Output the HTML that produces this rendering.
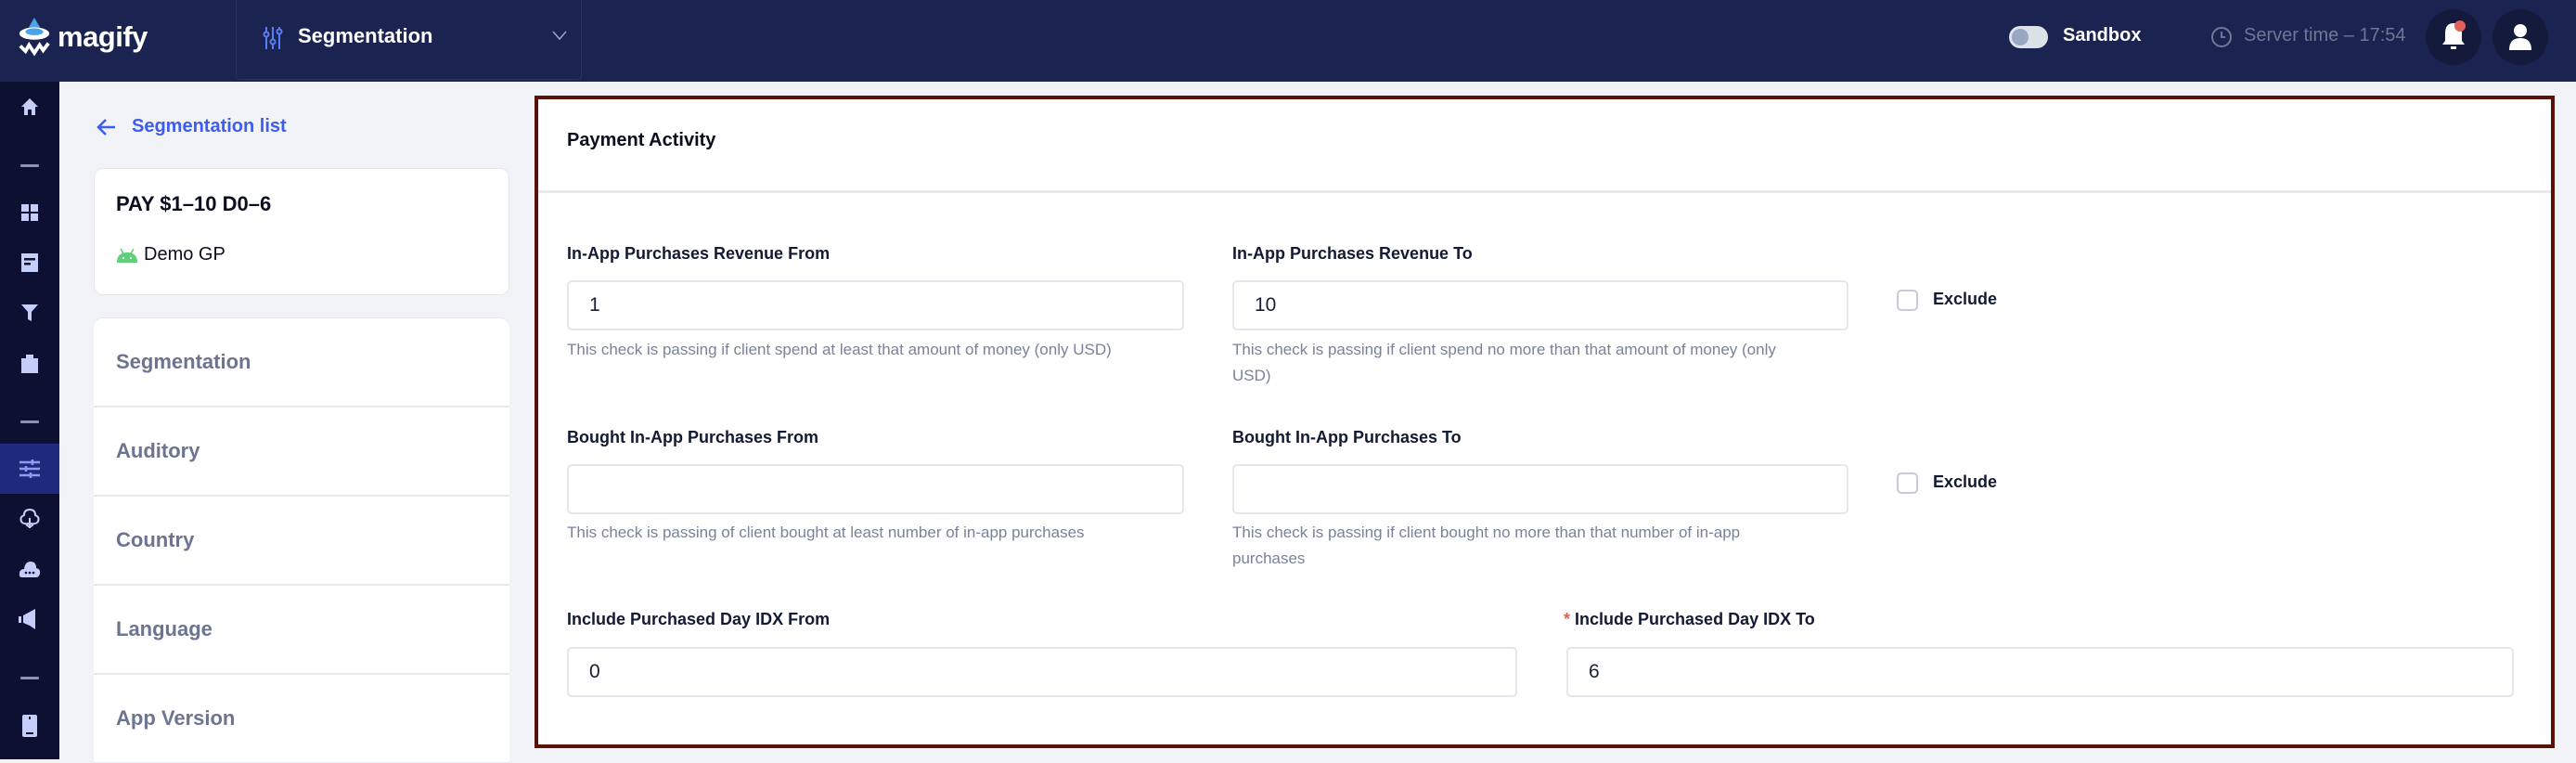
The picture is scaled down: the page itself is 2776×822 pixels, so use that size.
<!DOCTYPE html>
<html><head><meta charset="utf-8"><style>
*{box-sizing:border-box;margin:0;padding:0}
body{width:2776px;height:818px;overflow:hidden;background:#f2f3f7;font-family:"Liberation Sans",sans-serif;position:relative}
.abs{position:absolute}
.top{left:0;top:0;width:2776px;height:88px;background:#1b2350}
.side{left:0;top:88px;width:64px;height:730px;background:#0d1030}
.dash{position:absolute;left:22px;width:20px;height:3px;background:#8c93b3;border-radius:1px}
.card{position:absolute;left:101px;width:448px;background:#fff;border:1px solid #e4e6ee}
.menu{position:absolute;left:101px;width:448px;height:94px;background:#fff;color:#6b7490;font-size:22px;font-weight:bold;padding-left:24px;line-height:94px}
.lbl{position:absolute;font-size:18px;font-weight:bold;color:#131a33;line-height:20px}
.inp{position:absolute;height:54px;border:2.5px solid #e6e7ee;border-radius:5px;background:#fff;font-size:21px;color:#1a1f33;padding-left:22px;line-height:49px}
.help{position:absolute;font-size:17px;color:#7a8299;line-height:28px}
.cb{position:absolute;width:23px;height:23px;border:2.5px solid #c8cad8;border-radius:5px;background:#fff}
.exc{position:absolute;font-size:18px;font-weight:bold;color:#131a33}
</style></head><body>
<div class="abs top"></div>
<svg class="abs" style="left:18px;top:16px" width="38" height="46" viewBox="0 0 40 46">
<path d="M20 2 L27 14 Q30 18 20 19 Q10 18 13 14 Z" fill="#4aa3e8"/>
<ellipse cx="20" cy="20" rx="17" ry="7" fill="#fff"/>
<ellipse cx="20" cy="18" rx="10" ry="4" fill="#4aa3e8"/>
<path d="M4 34 L10 40 L14 33 L20 42 L26 33 L30 39 L36 31" stroke="#fff" stroke-width="4" fill="none"/>
</svg>
<div class="abs" style="left:62px;top:22px;color:#fff;font-size:31px;font-weight:bold;letter-spacing:-0.5px">magify</div>
<div class="abs" style="left:254px;top:0;width:373px;height:86px;border:1px solid #2a3260;border-top:none;border-radius:0 0 4px 4px"></div>
<svg class="abs" style="left:283px;top:28px" width="22" height="26" viewBox="0 0 22 26" stroke="#5b7cf5" stroke-width="2" fill="none">
<line x1="4" y1="1" x2="4" y2="25"/><circle cx="4" cy="9" r="2.5" fill="#1b2350"/>
<line x1="11" y1="1" x2="11" y2="25"/><circle cx="11" cy="17" r="2.5" fill="#1b2350"/>
<line x1="18" y1="1" x2="18" y2="25"/><circle cx="18" cy="6" r="2.5" fill="#1b2350"/></svg>
<div class="abs" style="left:321px;top:26px;color:#fff;font-size:22px;font-weight:bold">Segmentation</div>
<svg class="abs" style="left:594px;top:32px" width="18" height="12" viewBox="0 0 18 12"><path d="M2 2 L9 10 L16 2" stroke="#9aa0c0" stroke-width="1.6" fill="none"/></svg>
<div class="abs" style="left:2165px;top:28px;width:42px;height:24px;border-radius:12px;background:#dde1ea"></div>
<div class="abs" style="left:2168px;top:31px;width:18px;height:18px;border-radius:9px;background:#9aa6c2"></div>
<div class="abs" style="left:2223px;top:27px;color:#fff;font-size:20px;font-weight:bold">Sandbox</div>
<svg class="abs" style="left:2382px;top:28px" width="24" height="24" viewBox="0 0 24 24" stroke="#6f7796" stroke-width="2" fill="none"><circle cx="12" cy="12" r="10"/><path d="M12 6 V12 H16"/></svg>
<div class="abs" style="left:2418px;top:27px;color:#6f7796;font-size:20px">Server time – 17:54</div>
<div class="abs" style="left:2614px;top:10px;width:60px;height:60px;border-radius:30px;background:#131a3c"></div>
<svg class="abs" style="left:2630px;top:22px" width="28" height="34" viewBox="0 0 28 34"><path d="M14 3 Q5 3 5 14 L5 22 L2 26 L26 26 L23 22 L23 14 Q23 3 14 3Z" fill="#fff"/><rect x="11" y="28" width="6" height="3" fill="#fff"/><circle cx="21" cy="6" r="6" fill="#e0605a"/></svg>
<div class="abs" style="left:2686px;top:10px;width:60px;height:60px;border-radius:30px;background:#131a3c"></div>
<svg class="abs" style="left:2702px;top:24px" width="28" height="32" viewBox="0 0 28 32" fill="#fff"><circle cx="14" cy="9" r="7"/><path d="M2 30 Q2 17 14 17 Q26 17 26 30Z"/></svg>
<div class="abs side"></div>
<svg class="abs" style="left:22px;top:105px" width="20" height="20" viewBox="0 0 20 20" fill="#c5cdfa"><path d="M10 1 L19 10 L16 10 L16 19 L12 19 L12 13 L8 13 L8 19 L4 19 L4 10 L1 10Z"/></svg>
<div class="dash" style="top:177px"></div>
<svg class="abs" style="left:22px;top:219px" width="20" height="20" fill="#c5cdfa"><rect x="1" y="1" width="8" height="8"/><rect x="11" y="1" width="8" height="8"/><rect x="1" y="11" width="8" height="8"/><rect x="11" y="11" width="8" height="8"/></svg>
<svg class="abs" style="left:23px;top:273px" width="18" height="20"><rect x="0" y="0" width="18" height="20" fill="#c5cdfa"/><rect x="3" y="5" width="12" height="2.5" fill="#0d1030"/><rect x="3" y="10" width="7" height="2.5" fill="#0d1030"/></svg>
<svg class="abs" style="left:22px;top:327px" width="20" height="20" fill="#c5cdfa"><path d="M1 1 H19 L12 9 V19 L8 17 V9Z"/></svg>
<svg class="abs" style="left:22px;top:382px" width="20" height="20" fill="#c5cdfa"><rect x="6" y="0" width="8" height="5"/><rect x="1" y="4" width="18" height="16"/></svg>
<div class="dash" style="top:453px"></div>
<div class="abs" style="left:0;top:478px;width:64px;height:54px;background:#1f2a7c"></div>
<svg class="abs" style="left:20px;top:494px" width="24" height="22" stroke="#8c9cf5" stroke-width="2.5"><line x1="1" y1="4" x2="23" y2="4"/><line x1="1" y1="11" x2="23" y2="11"/><line x1="1" y1="18" x2="23" y2="18"/><line x1="15" y1="1" x2="15" y2="7"/><line x1="8" y1="8" x2="8" y2="14"/><line x1="13" y1="15" x2="13" y2="21"/></svg>
<svg class="abs" style="left:20px;top:548px" width="24" height="22" stroke="#c5cdfa" stroke-width="2" fill="none"><path d="M12 1 Q6 1 6 7 Q1 9 3 14 Q5 17 12 16 Q19 17 21 14 Q23 9 18 7 Q18 1 12 1Z M12 10 V21 M8 17 L12 20 L16 17"/></svg>
<svg class="abs" style="left:20px;top:603px" width="24" height="20" fill="#c5cdfa"><path d="M4 19 Q0 19 1 14 Q2 10 6 10 Q7 2 13 2 Q19 2 19 9 Q24 10 23 15 Q22 19 19 19Z"/><circle cx="8" cy="14" r="1.3" fill="#0d1030"/><circle cx="12" cy="14" r="1.3" fill="#0d1030"/><circle cx="16" cy="14" r="1.3" fill="#0d1030"/></svg>
<svg class="abs" style="left:20px;top:656px" width="24" height="22" fill="#c5cdfa"><rect x="0" y="8" width="3" height="7"/><path d="M5 7 L18 0 V22 L12 18 L5 15Z"/></svg>
<div class="dash" style="top:729px"></div>
<svg class="abs" style="left:24px;top:770px" width="16" height="24"><rect x="0" y="0" width="16" height="24" rx="2" fill="#c5cdfa"/><rect x="7" y="2" width="2" height="3" fill="#0d1030"/><rect x="4" y="19" width="8" height="2" fill="#0d1030"/></svg>
<svg class="abs" style="left:104px;top:127px" width="22" height="20" stroke="#3d5cf0" stroke-width="2.5" fill="none"><path d="M20 10 H3 M10 2 L2 10 L10 18"/></svg>
<div class="abs" style="left:142px;top:125px;color:#3d5cf0;font-size:20px;font-weight:bold">Segmentation list</div>
<div class="card" style="top:181px;height:137px;border-radius:10px"></div>
<div class="abs" style="left:125px;top:207px;font-size:22px;font-weight:bold;color:#0b0e1e">PAY $1–10 D0–6</div>
<svg class="abs" style="left:125px;top:266px" width="24" height="18" fill="#5dd07a"><path d="M1 17 Q1 6 12 6 Q23 6 23 17Z"/><line x1="5" y1="2" x2="8" y2="7" stroke="#5dd07a" stroke-width="1.5"/><line x1="19" y1="2" x2="16" y2="7" stroke="#5dd07a" stroke-width="1.5"/><circle cx="8" cy="12" r="1.2" fill="#fff"/><circle cx="16" cy="12" r="1.2" fill="#fff"/></svg>
<div class="abs" style="left:155px;top:263px;font-size:20px;color:#0b0e1e">Demo GP</div>
<div class="card" style="top:342px;height:480px;border-radius:10px 10px 0 0;background:#e8e9ef;border:none"></div>
<div class="menu" style="top:343px;border-radius:10px 10px 0 0">Segmentation</div>
<div class="menu" style="top:439px">Auditory</div>
<div class="menu" style="top:535px">Country</div>
<div class="menu" style="top:631px">Language</div>
<div class="menu" style="top:727px">App Version</div>
<div class="abs" style="left:576px;top:103px;width:2177px;height:703px;border:4px solid #5a1108;background:#fff"></div>
<div class="abs" style="left:611px;top:140px;font-size:20px;font-weight:bold;color:#0b0e1e">Payment Activity</div>
<div class="abs" style="left:580px;top:205px;width:2169px;height:3px;background:#e8e9ee"></div>

<div class="lbl" style="left:611px;top:263px">In-App Purchases Revenue From</div>
<div class="lbl" style="left:1328px;top:263px">In-App Purchases Revenue To</div>
<div class="inp" style="left:611px;top:302px;width:665px">1</div>
<div class="inp" style="left:1328px;top:302px;width:664px">10</div>
<div class="cb" style="left:2044px;top:312px"></div>
<div class="exc" style="left:2083px;top:312px">Exclude</div>
<div class="help" style="left:611px;top:363px">This check is passing if client spend at least that amount of money (only USD)</div>
<div class="help" style="left:1328px;top:363px;width:620px">This check is passing if client spend no more than that amount of money (only USD)</div>

<div class="lbl" style="left:611px;top:461px">Bought In-App Purchases From</div>
<div class="lbl" style="left:1328px;top:461px">Bought In-App Purchases To</div>
<div class="inp" style="left:611px;top:500px;width:665px"></div>
<div class="inp" style="left:1328px;top:500px;width:664px"></div>
<div class="cb" style="left:2044px;top:509px"></div>
<div class="exc" style="left:2083px;top:509px">Exclude</div>
<div class="help" style="left:611px;top:560px">This check is passing of client bought at least number of in-app purchases</div>
<div class="help" style="left:1328px;top:560px;width:620px">This check is passing if client bought no more than that number of in-app purchases</div>

<div class="lbl" style="left:611px;top:657px">Include Purchased Day IDX From</div>
<div class="lbl" style="left:1685px;top:657px"><span style="color:#e0605a">*</span> Include Purchased Day IDX To</div>
<div class="inp" style="left:611px;top:697px;width:1024px">0</div>
<div class="inp" style="left:1688px;top:697px;width:1021px">6</div>
</body></html>
